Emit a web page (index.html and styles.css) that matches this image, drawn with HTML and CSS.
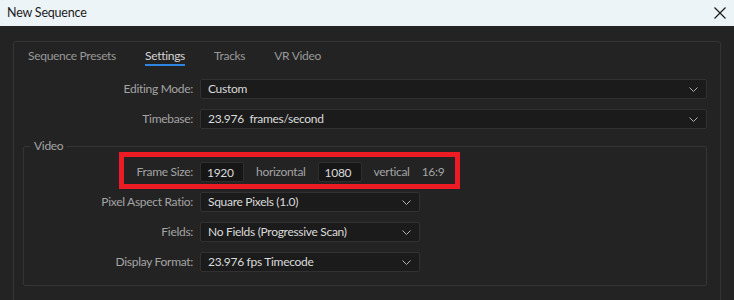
FILE: index.html
```html
<!DOCTYPE html>
<html lang="en">
    <head>
        <meta charset="UTF-8" />
        <meta name="viewport" content="width=device-width, initial-scale=1.0" />
        <title>New Sequence</title>
        <link rel="stylesheet" href="styles.css">
    </head>
    <body>
        <div class="titlebar">
            <span class="title">New Sequence</span>
            <svg class="close" width="12" height="12" viewBox="0 0 12 12">
                <path d="M0.5 0.5 L11.5 11.5 M11.5 0.5 L0.5 11.5" stroke="#1b1b1b" stroke-width="1.2" fill="none" />
            </svg>
        </div>

        <div class="content">
            <div class="panel">
                <div class="tabs">
                    <span class="tab">Sequence Presets</span>
                    <span class="tab active">Settings</span>
                    <span class="tab">Tracks</span>
                    <span class="tab">VR Video</span>
                </div>

                <div class="row">
                    <label class="label">Editing Mode:</label>
                    <div class="select wide">
                        <span>Custom</span>
                        <svg class="chevron" width="9" height="5" viewBox="0 0 9 5"><path d="M0.5 0.5 L4.5 4.5 L8.5 0.5" stroke="#b0b0b0" fill="none" /></svg>
                    </div>
                </div>
                <div class="row">
                    <label class="label">Timebase:</label>
                    <div class="select wide">
                        <span>23.976&nbsp; frames/second</span>
                        <svg class="chevron" width="9" height="5" viewBox="0 0 9 5"><path d="M0.5 0.5 L4.5 4.5 L8.5 0.5" stroke="#b0b0b0" fill="none" /></svg>
                    </div>
                </div>

                <fieldset class="group">
                    <legend>Video</legend>
                    <div class="row frame-row">
                        <label class="label">Frame Size:</label>
                        <div class="field">1920</div>
                        <span class="unit">horizontal</span>
                        <div class="field">1080</div>
                        <span class="unit">vertical</span>
                        <span class="unit">16:9</span>
                        <div class="highlight"></div>
                    </div>
                    <div class="row">
                        <label class="label">Pixel Aspect Ratio:</label>
                        <div class="select">
                            <span>Square Pixels (1.0)</span>
                            <svg class="chevron" width="9" height="5" viewBox="0 0 9 5"><path d="M0.5 0.5 L4.5 4.5 L8.5 0.5" stroke="#b0b0b0" fill="none" /></svg>
                        </div>
                    </div>
                    <div class="row">
                        <label class="label">Fields:</label>
                        <div class="select">
                            <span>No Fields (Progressive Scan)</span>
                            <svg class="chevron" width="9" height="5" viewBox="0 0 9 5"><path d="M0.5 0.5 L4.5 4.5 L8.5 0.5" stroke="#b0b0b0" fill="none" /></svg>
                        </div>
                    </div>
                    <div class="row">
                        <label class="label">Display Format:</label>
                        <div class="select">
                            <span>23.976 fps Timecode</span>
                            <svg class="chevron" width="9" height="5" viewBox="0 0 9 5"><path d="M0.5 0.5 L4.5 4.5 L8.5 0.5" stroke="#b0b0b0" fill="none" /></svg>
                        </div>
                    </div>
                </fieldset>
            </div>
        </div>
    </body>
</html>
```

FILE: styles.css
```css
body,
html {
    margin: 0;
    padding: 0;
    height: 100%;
    overflow: hidden;
}

body {
    background: #232323;
    font-family: Lato, "Noto Sans", sans-serif;
    font-size: 12px;
    letter-spacing: -0.3px;
    line-height: 16px;
}

.titlebar {
    height: 26px;
    background: #edf4f8;
    display: flex;
    align-items: center;
    justify-content: space-between;
    padding: 0 8px 0 7px;
}

.title {
    color: #1b1b1b;
    font-size: 12.5px;
    letter-spacing: -0.2px;
}

.close {
    margin-top: -1px;
}

.content {
    padding: 15px 13px 0 13px;
}

.panel {
    border: 1px solid #343434;
    border-radius: 3px;
    height: 300px;
}

.tabs {
    display: flex;
    gap: 29px;
    padding: 6px 0 0 14px;
    height: 27px;
    box-sizing: border-box;
}

.tab {
    color: #999999;
    height: 16px;
}

.tab.active {
    color: #d4d4d4;
    border-bottom: 2px solid #2f86e0;
}

.row {
    display: flex;
    align-items: center;
    height: 20px;
    margin-top: 10px;
    margin-right: 13px;
    position: relative;
}

.label {
    width: 179px;
    padding-right: 7px;
    box-sizing: content-box;
    text-align: right;
    color: #a3a3a3;
    flex-shrink: 0;
}

.select {
    height: 20px;
    box-sizing: border-box;
    width: 220px;
    background: #1b1b1b;
    border: 1px solid #313131;
    border-radius: 2px;
    display: flex;
    align-items: center;
    justify-content: space-between;
    padding: 0 8px 0 7px;
    color: #dadada;
}

.select.wide {
    flex: 1;
}

.chevron {
    flex-shrink: 0;
}

.group {
    border: 1px solid #343434;
    border-radius: 2px;
    margin: 9px 13px 0 9px;
    padding: 8px 0 13px 0;
}

.group .row {
    margin-right: 0;
}

.group .label {
    width: 169px;
}

.group legend {
    color: #a3a3a3;
    margin-left: 6px;
    padding: 0 4px;
}

.frame-row {
    gap: 12px;
    margin-top: 0;
}

.frame-row .label {
    margin-right: -12px;
}

.field {
    width: 44px;
    height: 20px;
    box-sizing: border-box;
    background: #161616;
    border: 1px solid #2f2f2f;
    border-radius: 2px;
    color: #dadada;
    padding: 1px 6px 0;
    line-height: 17px;
}

.unit {
    color: #a3a3a3;
}

.highlight {
    position: absolute;
    left: 95px;
    top: -10px;
    width: 341px;
    height: 37px;
    box-sizing: border-box;
    border: 5px solid #ed1c24;
}
```
